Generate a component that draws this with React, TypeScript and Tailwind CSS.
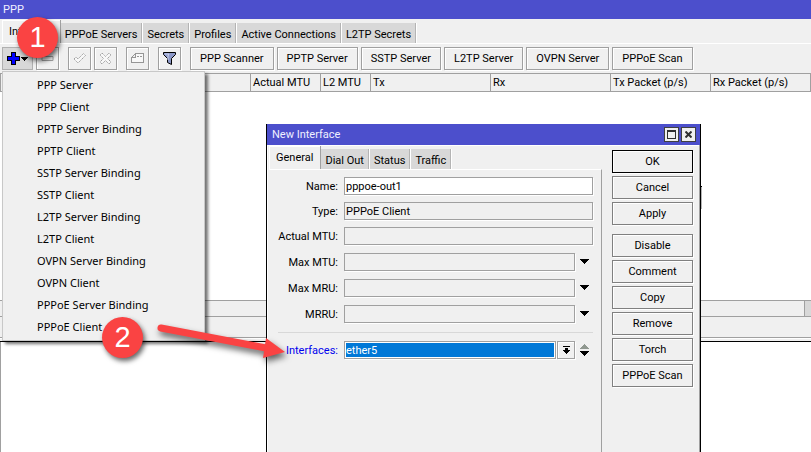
import type { ReactNode } from "react";

const menuItems = [
  "PPP Server",
  "PPP Client",
  "PPTP Server Binding",
  "PPTP Client",
  "SSTP Server Binding",
  "SSTP Client",
  "L2TP Server Binding",
  "L2TP Client",
  "OVPN Server Binding",
  "OVPN Client",
  "PPPoE Server Binding",
  "PPPoE Client",
];

const mainTabs = ["PPPoE Servers", "Secrets", "Profiles", "Active Connections", "L2TP Secrets"];

const tools = ["PPP Scanner", "PPTP Server", "SSTP Server", "L2TP Server", "OVPN Server", "PPPoE Scan"];

const columns = [
  { label: "Name", width: "w-[130px]" },
  { label: "Type", width: "w-[120px]" },
  { label: "Actual MTU", width: "w-[70px]" },
  { label: "L2 MTU", width: "w-[50px]" },
  { label: "Tx", width: "w-[120px]" },
  { label: "Rx", width: "w-[120px]" },
  { label: "Tx Packet (p/s)", width: "w-[100px]" },
  { label: "Rx Packet (p/s)", width: "w-auto" },
];

function IconButton({ label, children }: { label: string; children: ReactNode }) {
  return (
    <button
      aria-label={label}
      className="flex h-[23px] w-[23px] items-center justify-center border border-[#a0a0a0] bg-[#f0f0f0] shadow-[1px_1px_0_#fff,inset_1px_1px_0_#fff]"
    >
      {children}
    </button>
  );
}

function Tab({ label, active = false }: { label: string; active?: boolean }) {
  return active ? (
    <button
      role="tab"
      aria-selected="true"
      className="h-[23px] border-r border-[#a0a0a0] bg-[#f0f0f0] px-[7px] pb-px shadow-[inset_1px_1px_0_#fff]"
    >
      {label}
    </button>
  ) : (
    <button
      role="tab"
      aria-selected="false"
      className="h-5 border-r border-[#b4b4b4] bg-[#d8d8d8] px-1 pt-[2px] whitespace-nowrap shadow-[1px_0_0_#fff]"
    >
      {label}
    </button>
  );
}

function DialogButton({ label, primary = false }: { label: string; primary?: boolean }) {
  return (
    <button
      className={
        primary
          ? "h-[23px] border border-black bg-[#f0f0f0] shadow-[1px_1px_0_#fff,inset_1px_1px_0_#fff]"
          : "h-[23px] border border-[#808080] bg-[#f0f0f0] shadow-[1px_1px_0_#fff,inset_1px_1px_0_#fff]"
      }
    >
      {label}
    </button>
  );
}

function DownTriangle() {
  return (
    <svg className="block" width="9" height="5" viewBox="0 0 9 5" shapeRendering="crispEdges">
      <path d="M0 0h9v1h-1v1h-1v1h-1v1h-1v1h-1v-1h-1v-1h-1v-1h-1v-1h-1z" />
    </svg>
  );
}

function Field({
  id,
  label,
  value = "",
  editable = false,
  dropdown = false,
}: {
  id: string;
  label: string;
  value?: string;
  editable?: boolean;
  dropdown?: boolean;
}) {
  return (
    <div className="flex h-[18px] items-center">
      <label htmlFor={id} className="w-[69px] shrink-0 pr-[6px] text-right whitespace-nowrap">
        {label}
      </label>
      <input
        id={id}
        defaultValue={value}
        readOnly={!editable}
        className={
          editable
            ? "h-[18px] min-w-0 flex-1 border border-[#a0a0a0] bg-white px-px shadow-[1px_1px_0_#fff] outline-none"
            : "h-[18px] min-w-0 flex-1 border border-[#a0a0a0] bg-[#f0f0f0] px-px shadow-[1px_1px_0_#fff] outline-none"
        }
      />
      {dropdown && (
        <button
          type="button"
          aria-label={"Expand " + label}
          className="flex h-[18px] w-[18px] items-center justify-center pb-px"
        >
          <DownTriangle />
        </button>
      )}
    </div>
  );
}

function AddMenu() {
  return (
    <ul
      role="menu"
      className="absolute top-[71px] left-[2px] w-[203px] border border-[#c8c8c8] bg-[#f0f0f0] pt-px pb-[3px] font-['Noto_Sans','Open_Sans',sans-serif] text-[11px] shadow-[3px_3px_3px_rgba(0,0,0,0.55)]"
    >
      {menuItems.map((item) => (
        <li key={item} role="none">
          <button role="menuitem" className="flex h-[22px] w-full items-center pl-[34px] text-left">
            {item}
          </button>
        </li>
      ))}
    </ul>
  );
}

function MainWindow() {
  return (
    <section className="border-b border-black bg-[#f0f0f0]">
      <h1 className="h-[19px] bg-[#4c4fcc] pl-[3px] leading-[19px] text-[#f0f0ff]">PPP</h1>
      <div role="tablist" className="flex h-[24px] items-end pl-[2px]">
        <Tab label="Interface" active />
        <div className="flex gap-px">
          {mainTabs.map((tab) => (
            <Tab key={tab} label={tab} />
          ))}
        </div>
      </div>
      <div className="flex h-[30px] items-start border-t border-white pt-[3px] pl-[2px]">
        <button
          aria-label="Add"
          className="mr-[3px] flex h-[23px] w-[31px] items-center gap-px border border-[#b0b0b0] bg-[#d8d8d8] pl-[4px]"
        >
          <svg width="13" height="13" viewBox="0 0 13 13" shapeRendering="crispEdges">
            <path d="M4 0h5v4h4v5h-4v4h-5v-4h-4v-5h4z" fill="#000" />
            <path d="M5 1h3v4h4v3h-4v4h-3v-4h-4v-3h4z" fill="#0000ff" />
          </svg>
          <svg width="7" height="4" viewBox="0 0 7 4" shapeRendering="crispEdges">
            <path d="M0 0h7v1h-1v1h-1v1h-1v1h-1v-1h-1v-1h-1v-1h-1z" />
          </svg>
        </button>
        <div className="mr-[9px]">
          <IconButton label="Remove">
            <svg width="13" height="5" viewBox="0 0 13 5">
              <path d="M1 .5h11v4h-11z" fill="#f0f0f0" stroke="#a0a0a0" />
            </svg>
          </IconButton>
        </div>
        <div className="mr-[9px] flex gap-[3px]">
          <IconButton label="Enable">
            <svg width="13" height="11" viewBox="0 0 13 11">
              <path d="M1 6l2-2 2 2 5.5-5.5 2 2-7.5 7.5z" fill="#f8f8f8" stroke="#a0a0a0" strokeDasharray="1.5 .7" />
            </svg>
          </IconButton>
          <IconButton label="Disable">
            <svg width="13" height="13" viewBox="0 0 13 13">
              <path
                d="M3 1l3.5 3.5L10 1l2 2-3.5 3.5L12 10l-2 2-3.5-3.5L3 12l-2-2 3.5-3.5L1 3z"
                fill="#f8f8f8"
                stroke="#a0a0a0"
                strokeDasharray="1.5 .7"
              />
            </svg>
          </IconButton>
        </div>
        <div className="mr-[9px]">
          <IconButton label="Comment">
            <svg width="13" height="11" viewBox="0 0 13 11" fill="none" stroke="#969696" shapeRendering="crispEdges">
              <path d="M4.5 .5h8v9h-12v-5h4z" fill="#f8f8f8" />
              <path d="M.5 4.5l4-4M6 3.5h2M9 3.5h2" />
            </svg>
          </IconButton>
        </div>
        <div className="mr-[9px]">
          <IconButton label="Filter">
            <svg width="13" height="13" viewBox="0 0 13 13">
              <path d="M.5 .5h12v2l-4 4v6l-4-2v-4l-4-4z" fill="#8c98c8" stroke="#000" />
              <path d="M2 2h4l-1 2v4" fill="none" stroke="#c8d0ec" />
            </svg>
          </IconButton>
        </div>
        <div className="flex gap-[3px]">
          {tools.map((tool) => (
            <button
              key={tool}
              className="h-[23px] border border-[#a0a0a0] bg-[#f0f0f0] px-[9px] whitespace-nowrap shadow-[1px_1px_0_#fff,inset_1px_1px_0_#fff]"
            >
              {tool}
            </button>
          ))}
        </div>
      </div>
      <div className="h-[227px] overflow-hidden bg-white">
        <table className="w-full table-fixed border-collapse">
          <thead>
            <tr className="h-[18px]">
              {columns.map((column) => (
                <th
                  key={column.label}
                  className={`${column.width} h-[18px] border border-[#a0a0a0] bg-[#f0f0f0] p-0 pl-[2px] text-left leading-[16px] font-normal whitespace-nowrap`}
                >
                  {column.label}
                </th>
              ))}
            </tr>
          </thead>
        </table>
      </div>
      <div className="flex h-[17px] justify-end border-y border-[#a0a0a0]">
        <div className="w-[7px] border-l border-[#a0a0a0] bg-[#d8d8d8]" />
      </div>
      <div className="h-[21px] border-b border-[#a0a0a0]" />
      <div className="h-[3px] border-t border-white" />
    </section>
  );
}

function Dialog() {
  return (
    <section
      role="dialog"
      aria-label="New Interface"
      className="absolute top-[124px] bottom-0 left-[266px] flex w-[435px] flex-col border-x border-black bg-[#f0f0f0]"
    >
      <header className="flex h-[21px] shrink-0 items-center bg-[#4c4fcc] pr-1 pl-[5px]">
        <h2 className="flex-1 text-[#f0f0ff]">New Interface</h2>
        <div className="flex gap-[2px]">
          <button aria-label="Maximize" className="h-[15px] w-[15px] border border-[#404040] bg-[#f0f0f0] p-[2px]">
            <svg width="9" height="9" viewBox="0 0 9 9" fill="none" stroke="#303030" shapeRendering="crispEdges">
              <path d="M.5 .5h8v8h-8zM0 1.5h9" />
            </svg>
          </button>
          <button aria-label="Close" className="h-[15px] w-[15px] border border-[#404040] bg-[#f0f0f0] p-[3px]">
            <svg width="7" height="7" viewBox="0 0 7 7" stroke="#303030" strokeWidth="2">
              <path d="M.5 .5l6 6M6.5 .5l-6 6" />
            </svg>
          </button>
        </div>
      </header>
      <div className="flex flex-1 border-r border-[#a0a0a0] pt-px pl-[2px] shadow-[inset_1px_1px_0_#fff]">
        <div className="flex w-[333px] flex-col">
          <div role="tablist" className="flex h-[23px] items-end">
            <Tab label="General" active />
            <div className="flex gap-px">
              <Tab label="Dial Out" />
              <Tab label="Status" />
              <Tab label="Traffic" />
            </div>
          </div>
          <form className="flex-1 border-t border-r border-t-white border-r-[#a0a0a0] pt-[7px] pr-2 pl-[6px]">
            <div className="flex flex-col gap-[7px]">
              <Field id="name" label="Name:" value="pppoe-out1" editable />
              <Field id="type" label="Type:" value="PPPoE Client" />
              <Field id="actual-mtu" label="Actual MTU:" />
            </div>
            <div className="mt-2 flex flex-col gap-2">
              <Field id="max-mtu" label="Max MTU:" dropdown />
              <Field id="max-mru" label="Max MRU:" dropdown />
              <Field id="mrru" label="MRRU:" dropdown />
            </div>
            <hr className="mt-[9px] mb-2 ml-[3px] border-[#d8d8d8]" />
            <div className="flex h-[18px] items-center">
              <label htmlFor="interfaces" className="w-[69px] shrink-0 pr-[6px] text-right text-[#0000ee]">
                Interfaces:
              </label>
              <div className="h-[18px] min-w-0 flex-1 border border-[#a0a0a0] bg-white p-px shadow-[1px_1px_0_#fff]">
                <input
                  id="interfaces"
                  defaultValue="ether5"
                  className="block h-[14px] w-full bg-[#0078d7] text-white outline-none"
                />
              </div>
              <button
                type="button"
                aria-label="Choose interface"
                className="ml-px flex h-[18px] w-[18px] items-center justify-center border border-[#a0a0a0] shadow-[1px_1px_0_#fff,inset_1px_1px_0_#fff]"
              >
                <svg width="7" height="8" viewBox="0 0 7 8" shapeRendering="crispEdges">
                  <path d="M0 0h7v1h-7zM2 2h3v2h2v1h-1v1h-1v1h-1v1h-1v-1h-1v-1h-1v-1h-1v-1h2z" />
                </svg>
              </button>
              <div className="flex w-[18px] flex-col items-center gap-[2px]">
                <button type="button" aria-label="Previous interface">
                  <svg className="block" width="9" height="5" viewBox="0 0 9 5" shapeRendering="crispEdges">
                    <path fill="#909890" d="M0 5h9v-1h-1v-1h-1v-1h-1v-1h-1v-1h-1v1h-1v1h-1v1h-1v1h-1z" />
                  </svg>
                </button>
                <button type="button" aria-label="Next interface">
                  <DownTriangle />
                </button>
              </div>
            </div>
          </form>
        </div>
        <div className="ml-[10px] flex w-[81px] flex-col gap-[3px] pt-1">
          <DialogButton label="OK" primary />
          <DialogButton label="Cancel" />
          <DialogButton label="Apply" />
          <div className="mt-[6px] flex flex-col gap-[3px]">
            <DialogButton label="Disable" />
            <DialogButton label="Comment" />
            <DialogButton label="Copy" />
            <DialogButton label="Remove" />
            <DialogButton label="Torch" />
            <DialogButton label="PPPoE Scan" />
          </div>
        </div>
      </div>
      <span className="absolute top-[62px] -right-[2px] h-[23px] w-px border-t border-black bg-[#b4b4b4]" />
    </section>
  );
}

function StepBadge({ step, place }: { step: string; place: string }) {
  return (
    <div
      className={`absolute flex h-[41px] w-[41px] items-center justify-center rounded-full bg-[#fa4343] font-['Liberation_Sans',sans-serif] text-[29px] leading-none text-white shadow-[2px_3px_5px_rgba(0,0,0,0.6)] ${place}`}
    >
      {step}
    </div>
  );
}

export default function App() {
  return (
    <main className="relative flex min-h-screen flex-col overflow-hidden bg-white font-[Roboto,'Liberation_Sans',sans-serif] text-[11px] leading-[15px] text-black">
      <MainWindow />
      <div className="flex-1 border-l border-[#a0a0a0]" />
      <Dialog />
      <AddMenu />
      <svg
        className="absolute top-[315px] left-[150px] drop-shadow-[2px_4px_3px_rgba(0,0,0,0.6)]"
        width="140"
        height="56"
        viewBox="0 0 140 56"
        aria-hidden="true"
      >
        <path d="M11 13L116 33" stroke="#fa4343" strokeWidth="7" strokeLinecap="round" />
        <path d="M116 23L135 37L113 43Z" fill="#fa4343" />
      </svg>
      <StepBadge step="1" place="top-[17px] left-[17px]" />
      <StepBadge step="2" place="top-[317px] left-[102px]" />
    </main>
  );
}
